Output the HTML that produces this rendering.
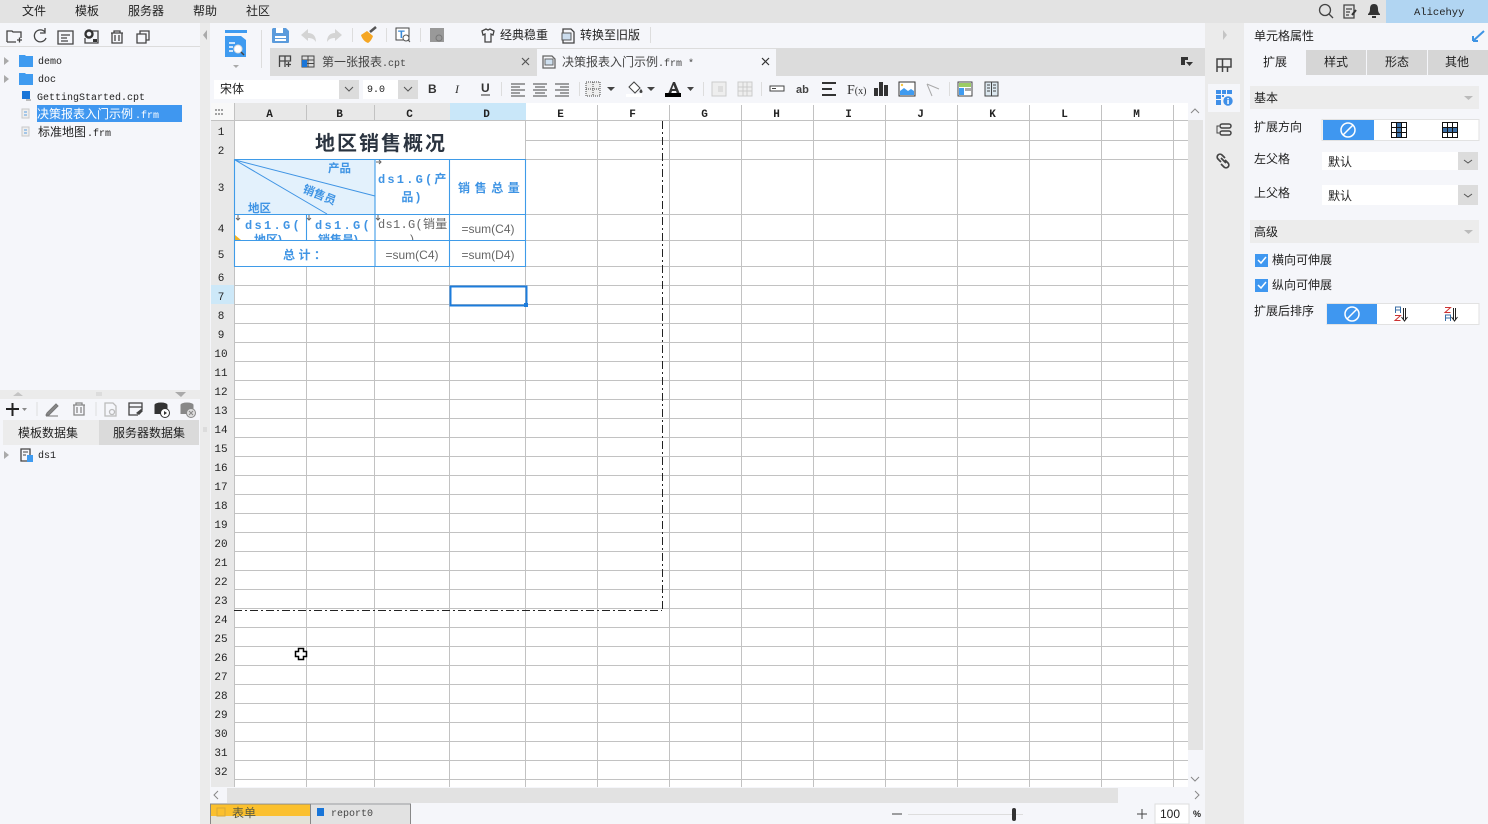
<!DOCTYPE html>
<html lang="zh"><head><meta charset="utf-8"><title>报表设计器</title>
<style>
html,body{margin:0;padding:0;width:1488px;height:824px;overflow:hidden;background:#f5f6fa}
svg{display:block}
text{font-family:"Liberation Sans","WenQuanYi Zen Hei","Noto Sans CJK SC",sans-serif;font-size:12px;fill:#222}
.m{font-family:"Liberation Mono","WenQuanYi Zen Hei","Noto Sans CJK SC",monospace;font-size:10px}
.n{font-family:"Liberation Mono",monospace;font-size:11px;text-anchor:middle}
.h{font-family:"Liberation Mono",monospace;font-size:11px;font-weight:bold;text-anchor:middle}
.c{text-anchor:middle}
.b{fill:#3f94e4;font-weight:bold}
.g{fill:#666}
.i{fill:none;stroke:#444;stroke-width:1.3}
</style></head><body>
<svg width="1488" height="824" viewBox="0 0 1488 824" xmlns="http://www.w3.org/2000/svg">
<defs>
<clipPath id="r4a"><rect x="235" y="215" width="71" height="25"/></clipPath>
<clipPath id="r4b"><rect x="307" y="215" width="68" height="25"/></clipPath>
<clipPath id="r4c"><rect x="376" y="215" width="73" height="25"/></clipPath>
</defs>
<!-- backgrounds -->
<rect width="1488" height="824" fill="#f5f6fa"/>
<rect width="1488" height="23" fill="#e3e3e3"/>
<rect x="1386" width="102" height="23" fill="#b1d5f2"/>
<rect x="200" y="23" width="10" height="801" fill="#ebebeb"/>
<rect x="0" y="46" width="200" height="1" fill="#dcdcdc"/>
<rect x="270" y="48" width="935" height="28" fill="#dcdcdc"/>
<rect x="537" y="49" width="239" height="27" fill="#f5f6fa"/>
<rect x="1205" y="23" width="39" height="801" fill="#ebebeb"/>
<rect x="1208" y="84" width="32" height="28" fill="#f5f6fa"/>
<!-- menu -->
<text x="22" y="15">文件</text><text x="75" y="15">模板</text><text x="128" y="15">服务器</text><text x="193" y="15">帮助</text><text x="246" y="15">社区</text>
<!-- top right icons -->
<circle cx="1325" cy="10" r="5.5" class="i"/><path d="M1329 14l4 4" class="i"/>
<path d="M1344 5h10v13h-10zM1346 9h6M1346 12h4M1346 15h3" class="i"/><path d="M1352 15l4-5" stroke="#333" stroke-width="2"/>
<path d="M1374 4c3 0 4 2 4 5 0 3 1 4 2 5v1h-12v-1c1-1 2-2 2-5 0-3 1-5 4-5zM1372 16h4v2h-4z" fill="#333"/>
<text x="1414" y="15" class="m" style="font-size:10.5px;font-family:'Liberation Mono',monospace">Alicehyy</text>
<!-- left toolbar -->
<g fill="none" stroke="#444" stroke-width="1.3">
<path d="M7 42V31h5l1 1h8v6M7 42h9M17 40h5M19.500 37.500v5"/>
<path d="M45 32a6 6 0 1 0 1 6M45 28v5h-5"/>
<path d="M58 31h15v13H58zM61 35h9M61 38h6M61 41h7"/>
<path d="M92 31h6v12H85v-5"/>
<path d="M111 33h12M114 33v-2h6v2M112 33v10h10V33M115 35v6M119 35v6"/>
<path d="M137 34h3v-3h9v9h-3v3h-9z M140 34h6v6"/>
</g>
<circle cx="89" cy="34" r="3.500" fill="none" stroke="#333" stroke-width="2.400"/><rect x="93" y="39" width="4" height="3" fill="#333"/>
<!-- tree -->
<g fill="#aaa"><path d="M4 57l5 4-5 4z"/><path d="M4 75l5 4-5 4z"/><path d="M4 451l5 4-5 4z"/></g>
<g fill="#3f9bf0"><path d="M19 55h6l1 1h7v11H19z"/><path d="M19 73h6l1 1h7v11H19z"/></g>
<text x="38" y="64" class="m" fill="#222">demo</text><text x="38" y="82" class="m">doc</text>
<rect x="22" y="91" width="8" height="8" fill="#1975d8"/><path d="M26 99h5v2h-5z" fill="#bbb"/>
<text x="37" y="100" class="m">GettingStarted.cpt</text>
<rect x="37" y="105" width="145" height="17" fill="#3f97f0"/>
<g fill="#eee" stroke="#c8c8c8"><path d="M22 109h7v9h-7z"/><path d="M22 127h7v9h-7z"/></g>
<path d="M24 112h3M24 115h3M24 130h3M24 133h3" stroke="#5a9ee0"/>
<text x="37" y="118" style="fill:#fff">决策报表入门示例</text><text x="135" y="118" class="m" style="fill:#fff">.frm</text>
<text x="38" y="136">标准地图</text><text x="87" y="136" class="m">.frm</text>
<!-- divider -->
<rect x="0" y="390" width="200" height="9" fill="#ebebeb"/>
<path d="M13 396l5-4 5 4z" fill="#c4c4c4"/><path d="M175 392h11l-5 5z" fill="#aaa"/><path d="M96 393h6M96 395h6" stroke="#ccc"/>
<!-- data toolbar -->
<path d="M6 409h13M12.500 403v13" stroke="#222" stroke-width="2"/><path d="M22 408h5l-2.500 3z" fill="#888"/>
<path d="M37 402v14" stroke="#ddd"/><path d="M47 413l9-9 2 2-9 9h-3zM46 416h12" stroke="#777" fill="#888"/>
<path d="M73 405h12M76 405v-2h6v2M74 405v10h10v-10M77 407v6M81 407v6" class="i" style="stroke:#888"/>
<path d="M96 402v14" stroke="#ddd"/>
<path d="M105 403h8l3 3v10h-11z" class="i" style="stroke:#bbb"/><circle cx="112" cy="412" r="2.500" class="i" style="stroke:#bbb"/>
<path d="M129 403h13v4h-13zM129 407v8h9M142 407v3" class="i"/><path d="M136 413l5-4 2 2-4 4z" fill="#444"/>
<ellipse cx="161" cy="405" rx="6.500" ry="2.500" fill="#333"/><path d="M154.500 405h13v9h-13z" fill="#333"/><circle cx="165" cy="413" r="4.500" fill="#fff" stroke="#333"/><path d="M164 411l3 2-3 2z" fill="#333"/>
<ellipse cx="187" cy="405" rx="6.500" ry="2.500" fill="#888"/><path d="M180.500 405h13v9h-13z" fill="#888"/><circle cx="191" cy="413" r="4.500" fill="#ddd" stroke="#888"/><path d="M189 411l4 4M193 411l-4 4" stroke="#888"/>
<!-- data tabs -->
<rect x="3" y="420" width="96" height="25" fill="#ececec"/><rect x="99" y="420" width="100" height="25" fill="#dadada"/>
<text x="18" y="437">模板数据集</text><text x="113" y="437">服务器数据集</text>
<path d="M204 427v5M206 427v5" stroke="#ccc"/>
<path d="M21 449h9v12H21z" class="i"/><path d="M23 452h5M23 455h3" stroke="#444"/><rect x="27" y="455" width="6" height="7" fill="#3f9bf0"/>
<text x="38" y="458" class="m">ds1</text>
<!-- main toolbar -->
<path d="M207 30l-4 5 4 5z" fill="#aaa"/>
<path d="M225 30h22v3h-22z" fill="#3f9bf0"/><path d="M225 36h16l5 4v17h-21z" fill="#3f9bf0"/>
<path d="M229 43h6M229 47h4M229 51h4" stroke="#fff" stroke-width="1.500"/><circle cx="238" cy="49" r="4" fill="#fff" stroke="#ddd"/><path d="M241 52l3 3" stroke="#444" stroke-width="1.500"/>
<path d="M233 65h6l-3 3z" fill="#aaa"/>
<path d="M261.500 30v38" stroke="#ddd"/>
<path d="M273 28h13l3 3v11a1 1 0 0 1-1 1h-15a1 1 0 0 1-1-1V29z" fill="#5b9bdc"/><rect x="276" y="28" width="7" height="5" fill="#fff"/><rect x="275" y="36" width="11" height="2" fill="#fff"/><rect x="275" y="39" width="11" height="2" fill="#fff"/>
<path d="M301 35l7-6v4c5 0 8 3 8 9-2-3-4-4-8-4v3z" fill="#d4d4d4"/><path d="M342 35l-7-6v4c-5 0-8 3-8 9 2-3 4-4 8-4v3z" fill="#d4d4d4"/>
<path d="M352.500 28v14M386.500 28v14M420.500 28v14" stroke="#ddd"/>
<path d="M361 35l6-4 6 5c-1 3-3 6-5 7-3-1-6-4-7-8z" fill="#f5a623"/><path d="M370 32l6-5" stroke="#555" stroke-width="2.500"/>
<rect x="396" y="28" width="13" height="12" fill="#fff" stroke="#444"/><text x="398" y="38" style="font-size:11px;font-weight:bold;fill:#3a8ad8">T</text><circle cx="406" cy="38" r="3" fill="#fff" stroke="#555"/><path d="M408 40l2 2" stroke="#555"/>
<rect x="430" y="28" width="14" height="14" fill="#999"/><circle cx="439" cy="38" r="3" fill="none" stroke="#777"/>
<path d="M482 31l4-2 2 1 2-1 4 2-1 4-2-1v8h-6v-8l-2 1z" class="i"/>
<text x="500" y="39">经典稳重</text>
<path d="M563 29h8l3 3v11h-11z" class="i"/><path d="M562 33h9v7h-9z" fill="#cde" stroke="#555"/>
<text x="580" y="39">转换至旧版</text>
<path d="M650.500 27v16" stroke="#ddd"/>
<!-- tabs -->
<path d="M279.500 56h11v5h-11zM279.500 61v6M285 56v11M288.500 62v5M286 64.500h5" class="i"/>
<rect x="302" y="56" width="12" height="11" fill="none" stroke="#444"/><path d="M308 56v11M302 60h12M302 63.500h12" stroke="#444"/><rect x="302" y="60" width="5" height="7" fill="#1975d8"/>
<text x="322" y="66" style="fill:#444">第一张报表</text><text x="382" y="66" class="m" style="fill:#444">.cpt</text>
<path d="M522 58l7 7M529 58l-7 7" stroke="#555" stroke-width="1.200"/>
<path d="M543 56h9l3 3v9h-12z" class="i" style="stroke:#666"/><path d="M545 59h8v6h-8z" fill="#cfe0f0" stroke="#666"/>
<text x="562" y="66" style="fill:#444">决策报表入门示例</text><text x="658" y="66" class="m" style="fill:#444">.frm *</text>
<path d="M762 58l7 7M769 58l-7 7" stroke="#333" stroke-width="1.200"/>
<path d="M1181 57h7v3h-3v5h-4z" fill="#333"/><path d="M1186 62h7l-3.500 4z" fill="#333"/>
<!-- format bar -->
<rect x="214" y="80" width="145" height="19" fill="#fff"/><rect x="339" y="80" width="20" height="19" fill="#dcdcdc"/>
<text x="220" y="93">宋体</text><path d="M345 87l4 4 4-4" fill="none" stroke="#555"/>
<rect x="363" y="80" width="54" height="19" fill="#fff"/><rect x="398" y="80" width="20" height="19" fill="#dcdcdc"/>
<text x="367" y="92" class="m">9.0</text><path d="M404 87l4 4 4-4" fill="none" stroke="#555"/>
<text x="428" y="93" style="font-weight:bold;font-size:12px;fill:#333">B</text>
<text x="455" y="93" style="font-style:italic;font-size:12px;fill:#333;font-family:'Liberation Serif'">I</text>
<text x="481" y="92" style="font-size:12px;fill:#333;font-weight:bold">U</text><path d="M481 95h9" stroke="#333"/>
<path d="M501.500 82v14M579.500 82v14M703.500 82v14M761.500 82v14M949.500 82v14" stroke="#ddd"/>
<path d="M511 84h14M511 87h9M511 90h14M511 93h9M511 96h14M533 84h14M535 87h10M533 90h14M535 93h10M533 96h14M555 84h14M560 87h9M555 90h14M560 93h9M555 96h14" stroke="#444"/>
<rect x="586" y="82" width="14" height="14" fill="#eee" stroke="#444" stroke-dasharray="1 1"/><path d="M593 82v14M586 89h14" stroke="#444" stroke-dasharray="1 1"/>
<path d="M607 87h8l-4 4zM647 87h8l-4 4zM687 87h7l-3.500 4z" fill="#444"/>
<path d="M629 87l5-5 6 6-5 5z" fill="#fff" stroke="#444"/><path d="M641 89c2 2 2 4 0 4-2 0-2-2 0-4z" fill="#444"/><rect x="626" y="94" width="16" height="3" fill="#fff"/>
<path d="M668 94l5-12h2l5 12h-3l-1-3h-4l-1 3zM672 89h3l-1.500-4z" fill="#333"/><rect x="665" y="93" width="16" height="4" fill="#000"/>
<rect x="712" y="82" width="14" height="14" fill="#eee" stroke="#ccc"/><path d="M718 86h5v6h-5z" fill="#ddd"/>
<rect x="738" y="82" width="14" height="14" fill="#eee" stroke="#ccc"/><path d="M738 87h14M738 91h14M743 82v14M747 82v14" stroke="#ccc"/>
<rect x="770" y="86" width="14" height="5" fill="#fff" stroke="#444"/><rect x="772" y="88" width="4" height="1" fill="#444"/>
<text x="796" y="93" style="font-size:11px;font-weight:bold;fill:#444">ab</text>
<path d="M822 83h14M822 89h10M822 95h14" stroke="#333" stroke-width="2"/>
<text x="847" y="94" style="font-size:14px;font-family:'Liberation Serif';fill:#333">F<tspan style="font-size:10px">(x)</tspan></text>
<path d="M874 88h4v8h-4zM879 82h4v14h-4zM884 85h4v11h-4z" fill="#333"/>
<rect x="899" y="82" width="16" height="14" fill="#fff" stroke="#333"/><path d="M900 95v-4l4-3 4 3 3-2 3 2v4z" fill="#3f9bf0"/><circle cx="902" cy="85" r="1.200" fill="#f5c542"/>
<path d="M927 84l12 5M927 84l5 12" stroke="#aaa" fill="none"/>
<rect x="958" y="82" width="14" height="14" fill="#fff" stroke="#444"/><rect x="959" y="83" width="12" height="4" fill="#9ccc65"/><rect x="959" y="88" width="5" height="7" fill="#3f9bf0"/><rect x="965" y="88" width="6" height="3" fill="#aaa"/>
<rect x="985" y="82" width="13" height="14" fill="#dce8f0" stroke="#444"/><path d="M991.500 82v14M987 85h3M987 88h3M987 91h3M993 85h3M993 88h3M993 91h3" stroke="#444"/>
<!-- grid -->
<rect x="234" y="121" width="954" height="666" fill="#fff"/>
<rect x="211" y="103" width="977" height="18" fill="#fff"/>
<rect x="234" y="103" width="216" height="18" fill="#e8e8e8"/>
<rect x="450" y="103" width="76" height="18" fill="#c9e7f9"/>
<rect x="211" y="103" width="23" height="18" fill="#f8f8f8"/>
<rect x="211" y="121" width="23" height="666" fill="#e8e8e8"/>
<rect x="211" y="285" width="23" height="19" fill="#cde8f8"/>
<g fill="#666"><circle cx="216" cy="110" r=".9"/><circle cx="219" cy="110" r=".9"/><circle cx="222" cy="110" r=".9"/><circle cx="216" cy="114" r=".9"/><circle cx="219" cy="114" r=".9"/><circle cx="222" cy="114" r=".9"/></g>
<path d="M211 120.500H1188M526 140.500H1188M526 159.500H1188M526 214.500H1188M526 240.500H1188M526 266.500H1188M234 285.500H1188M234 304.500H1188M234 323.500H1188M234 342.500H1188M234 361.500H1188M234 380.500H1188M234 399.500H1188M234 418.500H1188M234 437.500H1188M234 456.500H1188M234 475.500H1188M234 494.500H1188M234 513.500H1188M234 532.500H1188M234 551.500H1188M234 570.500H1188M234 589.500H1188M234 608.500H1188M234 627.500H1188M234 646.500H1188M234 665.500H1188M234 684.500H1188M234 703.500H1188M234 722.500H1188M234 741.500H1188M234 760.500H1188M234 779.500H1188" stroke="#c2c2c2"/>
<path d="M234.500 103V787M306.500 266V787M374.500 266V787M449.500 266V787M525.500 121V787M597.500 121V787M669.500 121V787M741.500 121V787M813.500 121V787M885.500 121V787M957.500 121V787M1029.500 121V787M1101.500 121V787M1173.500 121V787M306.500 105V120M374.500 105V120M597.500 105V120M669.500 105V120M741.500 105V120M813.500 105V120M885.500 105V120M957.500 105V120M1029.500 105V120M1101.500 105V120M1173.500 105V120" stroke="#c2c2c2"/>
<!-- col headers -->
<text x="269.500" y="117" class="h">A</text><text x="339.500" y="117" class="h">B</text><text x="409.500" y="117" class="h">C</text><text x="486.500" y="117" class="h">D</text><text x="560.500" y="117" class="h">E</text><text x="632.500" y="117" class="h">F</text><text x="704.500" y="117" class="h">G</text><text x="776.500" y="117" class="h">H</text><text x="848.500" y="117" class="h">I</text><text x="920.500" y="117" class="h">J</text><text x="992.500" y="117" class="h">K</text><text x="1064.500" y="117" class="h">L</text><text x="1136.500" y="117" class="h">M</text>
<!-- row headers -->
<text x="221" y="135" class="n">1</text><text x="221" y="154" class="n">2</text><text x="221" y="191" class="n">3</text><text x="221" y="232" class="n">4</text><text x="221" y="258" class="n">5</text><text x="221" y="281" class="n">6</text><text x="221" y="300" class="n">7</text><text x="221" y="319" class="n">8</text><text x="221" y="338" class="n">9</text><text x="221" y="357" class="n">10</text><text x="221" y="376" class="n">11</text><text x="221" y="395" class="n">12</text><text x="221" y="414" class="n">13</text><text x="221" y="433" class="n">14</text><text x="221" y="452" class="n">15</text><text x="221" y="471" class="n">16</text><text x="221" y="490" class="n">17</text><text x="221" y="509" class="n">18</text><text x="221" y="528" class="n">19</text><text x="221" y="547" class="n">20</text><text x="221" y="566" class="n">21</text><text x="221" y="585" class="n">22</text><text x="221" y="604" class="n">23</text><text x="221" y="623" class="n">24</text><text x="221" y="642" class="n">25</text><text x="221" y="661" class="n">26</text><text x="221" y="680" class="n">27</text><text x="221" y="699" class="n">28</text><text x="221" y="718" class="n">29</text><text x="221" y="737" class="n">30</text><text x="221" y="756" class="n">31</text><text x="221" y="775" class="n">32</text>
<!-- table -->
<rect x="235" y="159" width="140" height="55" fill="#e3f1fc"/>
<path d="M235 160L375 196M235 160L327 214" stroke="#3f94e4" fill="none"/>
<path d="M234.500 159.500H525.500V266.500H234.500ZM234.500 214.500H525.500M234.500 240.500H525.500M375 159.500V266.500M449.500 159.500V266.500M306.500 214.500V240.500" fill="none" stroke="#3f9be8" stroke-width="1.100"/>
<text x="381" y="150" class="c" style="font-size:20px;font-weight:bold;fill:#2b3440;letter-spacing:2px">地区销售概况</text>
<text x="328" y="172" class="b" style="font-size:11.500px">产品</text>
<text transform="translate(302 192) rotate(22)" class="b" style="font-size:11.500px">销售员</text>
<text x="248" y="212" class="b" style="font-size:11.500px">地区</text>
<text x="378" y="183" class="m b" style="font-size:12px;letter-spacing:2.200px">ds1.G(产</text>
<text x="412" y="201" class="m b c" style="font-size:12px;letter-spacing:1px">品)</text>
<text x="458" y="192" class="b" style="font-size:12px;letter-spacing:4.600px">销售总量</text>
<g clip-path="url(#r4a)"><text x="245" y="229" class="m b" style="font-size:12px;letter-spacing:2.300px">ds1.G(</text><text x="254" y="244" class="b">地区)</text></g>
<g clip-path="url(#r4b)"><text x="315" y="229" class="m b" style="font-size:12px;letter-spacing:2.300px">ds1.G(</text><text x="318" y="244" class="b">销售员)</text></g>
<g clip-path="url(#r4c)"><text x="378" y="228" class="m g" style="font-size:12px;fill:#666;letter-spacing:.3px">ds1.G(销量</text><text x="410" y="243" class="g">)</text></g>
<path d="M235 235l6 5h-6z" fill="#f0b429"/>
<path d="M238 215v5M236 218l2 2 2-2M309 215v5M307 218l2 2 2-2M378 215v5M376 218l2 2 2-2M376 162h5M379 160l2 2-2 2" stroke="#666" fill="none"/>
<text x="283" y="259" class="b" style="font-size:12px;letter-spacing:3.500px">总计：</text>
<text x="412" y="259" class="c g" style="font-size:12px">=sum(C4)</text>
<text x="488" y="233" class="c g" style="font-size:12px">=sum(C4)</text>
<text x="488" y="259" class="c g" style="font-size:12px">=sum(D4)</text>
<!-- selection -->
<rect x="450.500" y="286.500" width="76" height="19" fill="none" stroke="#1c7cdc" stroke-width="2"/>
<rect x="524" y="303" width="4" height="4" fill="#1c7cdc"/>
<!-- page boundary -->
<path d="M662.500 121V610" stroke="#222" stroke-dasharray="8 3 2 3" fill="none"/>
<path d="M234 610.500H662" stroke="#222" stroke-dasharray="8 3 2 3" fill="none"/>
<!-- cursor -->
<path d="M298.500 648.500h5v3h3v5h-3v3h-5v-3h-3v-5h3z" fill="#fff" stroke="#000" stroke-width="1.500"/>
<!-- scrollbars -->
<rect x="1188" y="103" width="17" height="684" fill="#f5f6fa"/>
<rect x="1188" y="120" width="15" height="630" fill="#e4e4e4"/>
<path d="M1191 113l4-4 4 4" fill="none" stroke="#888"/>
<rect x="211" y="787" width="994" height="17" fill="#f5f6fa"/>
<path d="M1191 777l4 4 4-4M1195 791l4 4-4 4M218 791l-4 4 4 4" fill="none" stroke="#888"/>
<rect x="227" y="788" width="891" height="15" fill="#e2e2e2"/>
<!-- sheet tabs -->
<rect x="211" y="804" width="99" height="20" fill="#e4e2d8"/>
<rect x="211" y="804" width="99" height="12" fill="#fbc02d"/>
<path d="M210.500 824v-20h200v20M310.500 804v20" fill="none" stroke="#888"/>
<rect x="311" y="805" width="99" height="19" fill="#e2e2e2"/>
<rect x="217" y="808" width="8" height="8" fill="none" stroke="#d8a838"/>
<text x="232" y="817" style="fill:#5a5a40">表单</text>
<rect x="317" y="808" width="7" height="8" fill="#1975d8"/>
<text x="331" y="816" class="m" style="fill:#444">report0</text>
<!-- zoom -->
<path d="M892 814h10M1137 814h10M1142 809v10" stroke="#444"/>
<path d="M908 814.500h115" stroke="#ddd"/>
<rect x="1012" y="808" width="4" height="13" rx="2" fill="#333"/>
<rect x="1155" y="804" width="34" height="20" fill="#fff" stroke="#ddd"/>
<text x="1160" y="818" style="font-size:12px">100</text>
<text x="1193" y="817" style="font-size:9px;font-weight:bold">%</text>
<!-- side icons -->
<path d="M1217 72V59H1231V67H1217M1222.500 59V72M1227.500 67V72" fill="none" stroke="#444" stroke-width="1.500"/>
<path d="M1216 90h5v4h-5zM1222 90h4v4h-4zM1227 90h5v4h-5zM1216 95h5v4h-5zM1216 100h5v5h-5zM1222 95h2v2h-2z" fill="#3f8fe8"/><circle cx="1228" cy="101" r="4.700" fill="#3f8fe8"/><rect x="1227.300" y="100" width="1.500" height="4" fill="#fff"/><rect x="1227.300" y="98" width="1.500" height="1.300" fill="#fff"/>
<path d="M1219 126h-2v7h2" fill="none" stroke="#444"/><rect x="1220" y="124" width="11" height="4" rx="2" fill="none" stroke="#444" stroke-width="1.500"/><rect x="1220" y="131" width="11" height="4" rx="2" fill="none" stroke="#444" stroke-width="1.500"/>
<path d="M1221 162l-3-3a2.500 2.500 0 0 1 4-4l3 3M1225 160l3 3a2.500 2.500 0 0 1-4 4l-3-3M1221 158l5 5" fill="none" stroke="#444" stroke-width="1.700"/>
<path d="M1223 30l4 5-4 5z" fill="#c4c4c4"/>
<!-- right panel -->
<text x="1254" y="40">单元格属性</text>
<path d="M1473 41l11-10M1473 41v-5M1473 41h5" stroke="#3f94e4" stroke-width="2" fill="none"/>
<rect x="1306" y="50" width="60" height="25" fill="#d6d6d6"/><rect x="1367" y="50" width="60" height="25" fill="#d6d6d6"/><rect x="1428" y="50" width="60" height="25" fill="#d6d6d6"/>
<text x="1263" y="66">扩展</text><text x="1324" y="66">样式</text><text x="1385" y="66">形态</text><text x="1445" y="66">其他</text>
<rect x="1250" y="86" width="229" height="23" fill="#ececec"/>
<text x="1254" y="102">基本</text><path d="M1464 96h9l-4.500 4z" fill="#bbb"/>
<text x="1254" y="131">扩展方向</text>
<rect x="1322" y="119.500" width="157" height="21" fill="#fff" stroke="#e2e2e2"/><rect x="1323" y="120" width="51" height="20" fill="#3f97f0"/>
<circle cx="1348" cy="130" r="7" fill="none" stroke="#fff" stroke-width="1.500"/><path d="M1343 135l10-10" stroke="#fff" stroke-width="1.500"/>
<rect x="1391.500" y="122.500" width="15" height="15" fill="#fff" stroke="#111"/><rect x="1396" y="123" width="5" height="14" fill="#3a6ea5"/><path d="M1396.500 122v15M1401.500 122v15M1391 127.500h15M1391 132.500h15" stroke="#111"/>
<rect x="1442.500" y="122.500" width="15" height="15" fill="#fff" stroke="#111"/><rect x="1443" y="128" width="14" height="5" fill="#3a6ea5"/><path d="M1447.500 122v15M1452.500 122v15M1442 127.500h15M1442 132.500h15" stroke="#111"/>
<text x="1254" y="163">左父格</text>
<rect x="1322" y="152" width="156" height="18" fill="#fff"/><rect x="1458" y="152" width="20" height="18" fill="#dcdcdc"/>
<text x="1328" y="166">默认</text><path d="M1464 160l4 3 4-3" fill="none" stroke="#555"/>
<text x="1254" y="197">上父格</text>
<rect x="1322" y="185" width="156" height="20" fill="#fff"/><rect x="1458" y="185" width="20" height="20" fill="#dcdcdc"/>
<text x="1328" y="200">默认</text><path d="M1464 194l4 3 4-3" fill="none" stroke="#555"/>
<rect x="1250" y="220" width="229" height="23" fill="#ececec"/>
<text x="1254" y="236">高级</text><path d="M1464 230h9l-4.500 4z" fill="#bbb"/>
<rect x="1255" y="254" width="13" height="13" fill="#3f97f0"/><path d="M1258 260l3 3 5-6" stroke="#fff" stroke-width="1.500" fill="none"/>
<text x="1272" y="264">横向可伸展</text>
<rect x="1255" y="279" width="13" height="13" fill="#3f97f0"/><path d="M1258 285l3 3 5-6" stroke="#fff" stroke-width="1.500" fill="none"/>
<text x="1272" y="289">纵向可伸展</text>
<text x="1254" y="315">扩展后排序</text>
<rect x="1327" y="303.500" width="152" height="21" fill="#fff" stroke="#e2e2e2"/><rect x="1327" y="304" width="50" height="20" fill="#3f97f0"/>
<circle cx="1352" cy="314" r="7" fill="none" stroke="#fff" stroke-width="1.500"/><path d="M1347 319l10-10" stroke="#fff" stroke-width="1.500"/>
<path d="M1395.500 313v-6h5v6M1395.500 310h5" fill="none" stroke="#3a6ea5"/><path d="M1395 315.500h5.500l-5.500 5h5.500" fill="none" stroke="#c33"/><path d="M1403.500 308v12M1405.500 308v12M1401.500 317l3 4 3-4" fill="none" stroke="#222"/>
<path d="M1445 307.500h5.500l-5.500 5h5.500" fill="none" stroke="#c33"/><path d="M1445.500 321v-6h5v6M1445.500 318h5" fill="none" stroke="#3a6ea5"/><path d="M1453.500 308v12M1455.500 308v12M1451.500 317l3 4 3-4" fill="none" stroke="#222"/>
</svg>
</body></html>
